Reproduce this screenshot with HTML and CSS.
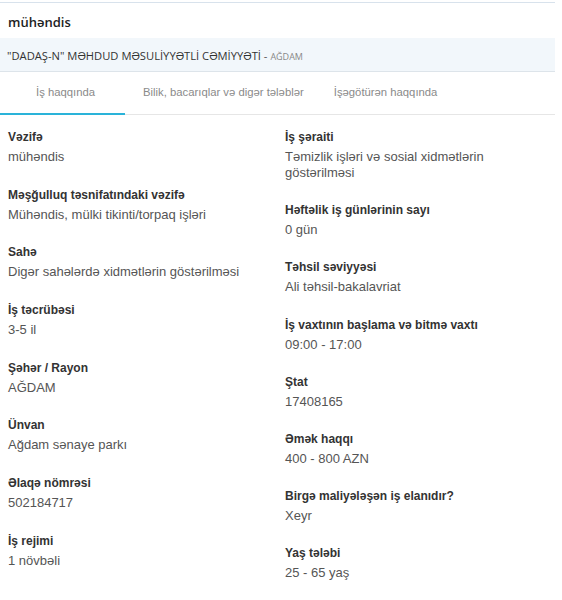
FILE: index.html
```html
<!DOCTYPE html>
<html lang="az">
<head>
<meta charset="utf-8">
<title>mühəndis</title>
<link rel="stylesheet" href="styles.css">
</head>
<body>
<div class="page">
  <div class="title">mühəndis</div>
  <div class="company">"DADAŞ-N" MƏHDUD MƏSULİYYƏTLİ CƏMİYYƏTİ <span class="dash">-</span> <span class="city">AĞDAM</span></div>
  <div class="tabs">
    <div class="tab tab-1 active">İş haqqında</div>
    <div class="tab tab-2">Bilik, bacarıqlar və digər tələblər</div>
    <div class="tab tab-3">İşəgötürən haqqında</div>
  </div>
  <div class="content">
    <div class="col col-left">
      <div class="item"><div class="label">Vəzifə</div><div class="value">mühəndis</div></div>
      <div class="item"><div class="label">Məşğulluq təsnifatındaki vəzifə</div><div class="value">Mühəndis, mülki tikinti/torpaq işləri</div></div>
      <div class="item"><div class="label">Sahə</div><div class="value">Digər sahələrdə xidmətlərin göstərilməsi</div></div>
      <div class="item"><div class="label">İş təcrübəsi</div><div class="value">3-5 il</div></div>
      <div class="item"><div class="label">Şəhər / Rayon</div><div class="value">AĞDAM</div></div>
      <div class="item"><div class="label">Ünvan</div><div class="value">Ağdam sənaye parkı</div></div>
      <div class="item"><div class="label">Əlaqə nömrəsi</div><div class="value">502184717</div></div>
      <div class="item"><div class="label">İş rejimi</div><div class="value">1 növbəli</div></div>
    </div>
    <div class="col col-right">
      <div class="item"><div class="label">İş şəraiti</div><div class="value">Təmizlik işləri və sosial xidmətlərin<br>göstərilməsi</div></div>
      <div class="item"><div class="label">Həftəlik iş günlərinin sayı</div><div class="value">0 gün</div></div>
      <div class="item"><div class="label">Təhsil səviyyəsi</div><div class="value">Ali təhsil-bakalavriat</div></div>
      <div class="item"><div class="label">İş vaxtının başlama və bitmə vaxtı</div><div class="value">09:00 - 17:00</div></div>
      <div class="item"><div class="label">Ştat</div><div class="value">17408165</div></div>
      <div class="item"><div class="label">Əmək haqqı</div><div class="value">400 - 800 AZN</div></div>
      <div class="item"><div class="label">Birgə maliyələşən iş elanıdır?</div><div class="value">Xeyr</div></div>
      <div class="item"><div class="label">Yaş tələbi</div><div class="value">25 - 65 yaş</div></div>
    </div>
  </div>
</div>
</body>
</html>
```

FILE: styles.css
```css
html, body {
  margin: 0;
  padding: 0;
  background: #ffffff;
}

.page {
  width: 555px;
  padding-top: 2px;
}

.title {
  border-top: 1px solid #d8e2ec;
  height: 31px;
  padding-top: 4px;
  line-height: 31px;
  padding-left: 8px;
  font-family: "Open Sans", sans-serif;
  font-weight: 600;
  font-size: 13px;
  color: #222;
}

.company {
  background: #f2f7fb;
  border-bottom: 1px solid #dde4ea;
  height: 33px;
  line-height: 35px;
  padding-left: 7px;
  font-family: "Open Sans", sans-serif;
  font-size: 11.2px;
  color: #333;
  white-space: nowrap;
}

.company .dash {
  color: #555;
}

.company .city {
  font-size: 9px;
  color: #888;
}

.tabs {
  display: flex;
  height: 42px;
  border-bottom: 1px solid #e6e6e6;
}

.tab {
  font-family: "Liberation Sans", Arial, sans-serif;
  font-size: 11.3px;
  color: #8a8a8a;
  line-height: 41px;
  white-space: nowrap;
}

.tab-1 {
  width: 125px;
  box-sizing: border-box;
  padding-left: 36px;
  border-bottom: 2px solid #2ab3d9;
  margin-bottom: -1px;
}

.tab-2 {
  padding-left: 18px;
}

.tab-3 {
  padding-left: 30px;
}

.content {
  display: grid;
  grid-template-columns: 277px 1fr;
  padding: 13px 0 0 8px;
}

.col {
  display: flex;
  flex-direction: column;
  gap: 20.7px;
}

.col-right {
  gap: 20.2px;
}

.label {
  font-family: "Liberation Sans", Arial, sans-serif;
  font-weight: bold;
  font-size: 12px;
  line-height: 18px;
  color: #333;
}

.value {
  font-family: "Liberation Sans", Arial, sans-serif;
  font-size: 13px;
  line-height: 16px;
  margin-top: 3px;
  color: #555;
}
```
